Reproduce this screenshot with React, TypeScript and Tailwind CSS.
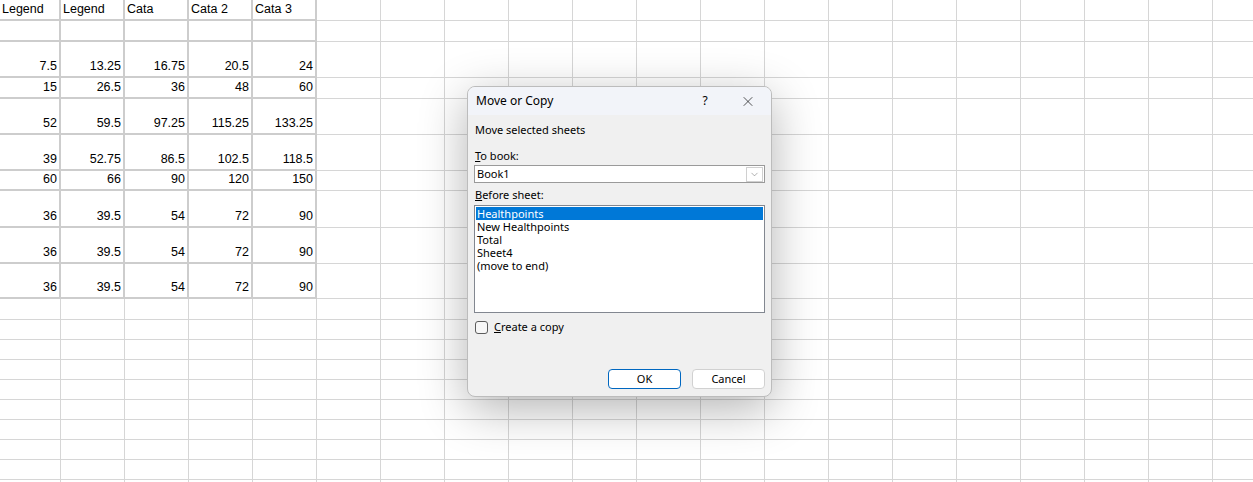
import { X, ChevronDown } from "lucide-react"

const colWidths = [61, ...Array(19).fill(64)]
const rowHeights = [21, 21, 36, 21, 36, 36, 20, 37, 36, 35, 21, 20, 20, 20, 20, 20, 20, 20, 20, 20]

const header = ["Legend", "Legend", "Cata", "Cata 2", "Cata 3"]
const data: (string[] | null)[] = [
  null,
  ["7.5", "13.25", "16.75", "20.5", "24"],
  ["15", "26.5", "36", "48", "60"],
  ["52", "59.5", "97.25", "115.25", "133.25"],
  ["39", "52.75", "86.5", "102.5", "118.5"],
  ["60", "66", "90", "120", "150"],
  ["36", "39.5", "54", "72", "90"],
  ["36", "39.5", "54", "72", "90"],
  ["36", "39.5", "54", "72", "90"],
]

const sheets = ["Healthpoints", "New Healthpoints", "Total", "Sheet4", "(move to end)"]

function Grid() {
  return (
    <div
      className="grid"
      style={{
        gridTemplateColumns: colWidths.map((w) => `${w}px`).join(" "),
        gridTemplateRows: rowHeights.map((h) => `${h}px`).join(" "),
      }}
    >
      {rowHeights.map((_, r) =>
        colWidths.map((_, c) => {
          const inData = r < 10 && c < 5
          let text = ""
          let right = true
          if (r === 0 && c < 5) {
            text = header[c]
            right = false
          } else if (r >= 1 && r <= 9 && c < 5) {
            const row = data[r - 1]
            text = row ? row[c] : ""
          }
          return (
            <div
              key={`${r}-${c}`}
              className={
                inData
                  ? "flex items-end border-r-2 border-b-2 border-[#cdcdcd] px-[2px] pb-[3px] text-[12.5px] leading-[14px] text-black"
                  : "border-r border-b border-[#d6d6d6]"
              }
              style={inData ? { justifyContent: right ? "flex-end" : "flex-start" } : undefined}
            >
              {text}
            </div>
          )
        }),
      )}
    </div>
  )
}

function Dialog() {
  return (
    <div className="absolute top-[86px] left-[467px] flex h-[311px] w-[305px] flex-col overflow-hidden rounded-[8px] border border-[#bcbcbc] bg-[#f0f0f0] shadow-[0_12px_48px_rgba(0,0,0,0.3)] [font-family:'Noto_Sans',sans-serif] text-[11px] leading-[14px] text-black">
      <div className="flex h-[28px] shrink-0 items-center bg-[#f2f4f9] pl-[8px]">
        <span className="text-[12px]">Move or Copy</span>
        <span className="ml-auto w-[20px] text-center text-[12px]">?</span>
        <span className="mr-[15px] ml-[25px] flex w-[16px] justify-center">
          <X size={17} strokeWidth={1} />
        </span>
      </div>
      <div className="flex flex-1 flex-col px-[6px]">
        <div className="mt-[8px] pl-[1px]">Move selected sheets</div>
        <div className="mt-[12px] pl-[1px]">
          <span className="underline">T</span>o book:
        </div>
        <div className="mt-[2px] flex h-[18px] items-center border border-[#9a9a9a] bg-white pl-[2px]">
          <span>Book1</span>
          <span className="mr-[1px] ml-auto flex h-[15px] w-[17px] items-center justify-center border border-[#d0d0d0] bg-white">
            <ChevronDown size={11} strokeWidth={1} className="text-[#555]" />
          </span>
        </div>
        <div className="mt-[5px] pl-[1px]">
          <span className="underline">B</span>efore sheet:
        </div>
        <div className="mt-[3px] flex h-[108px] flex-col border border-[#828790] bg-white p-[1px]">
          {sheets.map((s, i) => (
            <div
              key={s}
              className={
                i === 0
                  ? "h-[13px] bg-[#0078d7] pl-[1px] leading-[13px] text-white"
                  : "h-[13px] pl-[1px] leading-[13px]"
              }
            >
              {s}
            </div>
          ))}
        </div>
        <div className="mt-[7px] flex items-center pl-[1px]">
          <span className="h-[13px] w-[13px] rounded-[3px] border border-[#5c5c5c] bg-[#f7f7f7]" />
          <span className="ml-[6px]">
            <span className="underline">C</span>reate a copy
          </span>
        </div>
        <div className="mt-[35px] flex justify-end gap-[11px]">
          <button className="flex h-[20px] w-[73px] items-center justify-center rounded-[4px] border border-[#0067c0] bg-white text-[11px]">
            OK
          </button>
          <button className="flex h-[20px] w-[73px] items-center justify-center rounded-[4px] border border-[#d1d1d1] bg-white text-[11px]">
            Cancel
          </button>
        </div>
      </div>
    </div>
  )
}

export default function App() {
  return (
    <div className="relative h-[482px] w-[1253px] overflow-hidden bg-white [font-family:'Liberation_Sans',Arial,sans-serif]">
      <Grid />
      <Dialog />
    </div>
  )
}
